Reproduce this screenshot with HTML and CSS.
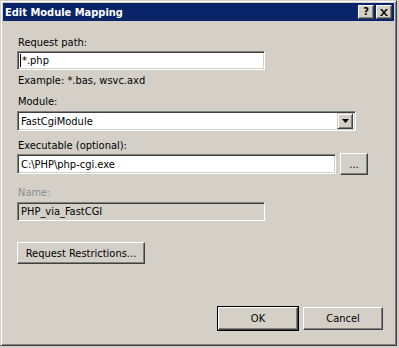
FILE: index.html
```html
<!DOCTYPE html>
<html lang="en">
<head>
    <meta charset="UTF-8">
    <title>Edit Module Mapping</title>
    <link rel="stylesheet" href="styles.css">
</head>
<body>
    <div class="window">
        <div class="titlebar">
            <span class="title">Edit Module Mapping</span>
            <div class="title-buttons">
                <div class="tbtn help">?</div>
                <div class="tbtn close">
                    <svg width="8" height="7" viewBox="0 0 8 7">
                        <path d="M0 0h2l2 2.5 2-2.5h2l-3 3.5 3 3.5h-2l-2-2.5-2 2.5h-2l3-3.5z" fill="#000"/>
                    </svg>
                </div>
            </div>
        </div>

        <div class="content">
            <div class="label first">Request path:</div>
            <div class="textbox wide"><span class="caret"></span>*.php</div>
            <div class="hint">Example: *.bas, wsvc.axd</div>

            <div class="label">Module:</div>
            <div class="textbox select">
                <span>FastCgiModule</span>
                <div class="drop">
                    <svg width="7" height="4" viewBox="0 0 7 4"><path d="M0 0h7l-3.5 4z" fill="#000"/></svg>
                </div>
            </div>

            <div class="label">Executable (optional):</div>
            <div class="exec-row">
                <div class="textbox exec">C:\PHP\php-cgi.exe</div>
                <button class="btn browse">...</button>
            </div>

            <div class="label disabled">Name:</div>
            <div class="textbox wide readonly">PHP_via_FastCGI</div>

            <button class="btn restrict">Request Restrictions...</button>

            <div class="footer">
                <button class="btn default">OK</button>
                <button class="btn">Cancel</button>
            </div>
        </div>
    </div>
</body>
</html>
```

FILE: styles.css
```css
body {
    margin: 0;
    background: #d4d0c8;
    font-family: 'DejaVu Sans Condensed', 'DejaVu Sans', sans-serif;
    font-stretch: condensed;
    font-size: 11px;
    color: #000;
}

.window {
    box-sizing: border-box;
    width: 397px;
    height: 346px;
    padding: 2px;
    background: #d4d0c8;
    border: 1px solid;
    border-color: #d4d0c8 #404040 #404040 #d4d0c8;
    box-shadow: inset 1px 1px #fff, inset -1px -1px #808080;
    display: flex;
    flex-direction: column;
}

.titlebar {
    height: 18px;
    background: #0a246a;
    display: flex;
    align-items: center;
    justify-content: space-between;
    padding-left: 2px;
}

.title {
    color: #fff;
    font-weight: bold;
    font-size: 11px;
}

.title-buttons {
    display: flex;
    gap: 2px;
    margin-right: 2px;
}

.tbtn {
    box-sizing: border-box;
    width: 16px;
    height: 14px;
    background: #d4d0c8;
    border: 1px solid;
    border-color: #fff #404040 #404040 #fff;
    box-shadow: inset -1px -1px #808080;
    display: flex;
    align-items: center;
    justify-content: center;
}

.help {
    font-weight: bold;
    font-size: 11px;
    line-height: 12px;
}

.content {
    flex: 1;
    display: flex;
    flex-direction: column;
    align-items: flex-start;
    padding-left: 14px;
}

.label {
    line-height: 13px;
    margin-top: 8px;
    padding-left: 1px;
}

.label.first {
    margin-top: 15px;
}

.exec-row + .label {
    margin-top: 11px;
}

.hint + .label {
    margin-top: 8px;
}

.label.disabled {
    color: #8c8c8c;
}

.textbox {
    box-sizing: border-box;
    height: 19px;
    margin-top: 2px;
    background: #fff;
    border: 1px solid;
    border-color: #808080 #fff #fff #808080;
    box-shadow: inset 1px 1px #404040, inset -1px -1px #d4d0c8;
    padding-left: 3px;
    display: flex;
    align-items: center;
    white-space: nowrap;
}

.wide {
    width: 248px;
}

.caret {
    width: 1px;
    height: 13px;
    background: #000;
    margin-right: 1px;
    margin-left: -1px;
}

.hint {
    line-height: 13px;
    margin-top: 4px;
    padding-left: 1px;
}

.select {
    width: 339px;
    height: 20px;
    margin-top: 3px;
    justify-content: space-between;
    padding-right: 2px;
}

.drop {
    box-sizing: border-box;
    width: 16px;
    height: 16px;
    background: #d4d0c8;
    border: 1px solid;
    border-color: #d4d0c8 #404040 #404040 #d4d0c8;
    box-shadow: inset 1px 1px #fff, inset -1px -1px #808080;
    display: flex;
    align-items: center;
    justify-content: center;
}

.exec-row {
    display: flex;
    align-items: center;
    gap: 4px;
    margin-top: 1px;
}

.exec {
    width: 319px;
    height: 20px;
    margin-top: 0;
}

.readonly {
    background: #d4d0c8;
    margin-top: 3px;
}

.btn {
    box-sizing: border-box;
    font-family: 'DejaVu Sans Condensed', 'DejaVu Sans', sans-serif;
    font-stretch: condensed;
    font-size: 11px;
    color: #000;
    background: #d4d0c8;
    border: 1px solid;
    border-color: #fff #404040 #404040 #fff;
    box-shadow: inset -1px -1px #808080;
    padding: 0;
    height: 23px;
}

.browse {
    width: 28px;
    height: 22px;
}

.restrict {
    width: 128px;
    height: 22px;
    margin-top: 21px;
}

.footer {
    display: flex;
    gap: 4px;
    margin-top: auto;
    margin-bottom: 13px;
    align-self: flex-end;
    margin-right: 11px;
}

.footer .btn {
    width: 80px;
}

.footer .default {
    outline: 1px solid #000;
    width: 80px;
    margin-right: 1px;
}
```
